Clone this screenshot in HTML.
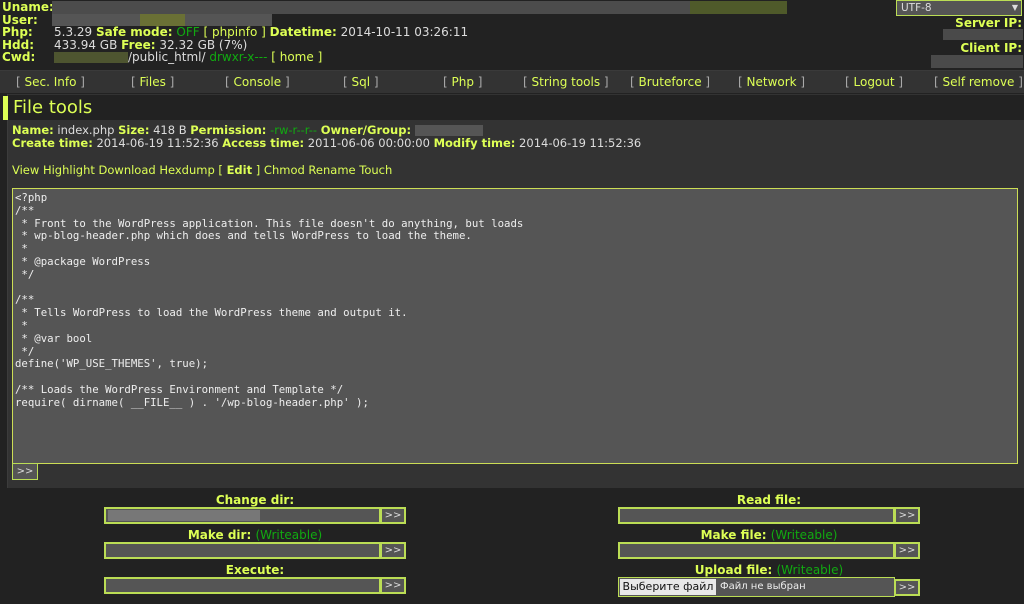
<!DOCTYPE html>
<html><head><meta charset="utf-8"><style>
*{margin:0;padding:0;box-sizing:border-box}
body{width:1024px;height:604px;background:#222;font-family:"DejaVu Sans","Liberation Sans",sans-serif;font-size:11.5px;color:#ddd;position:relative;overflow:hidden}
.a{position:absolute;white-space:nowrap}
b,.y{color:#df5;font-weight:bold}
.g{color:#1a1}
.n{color:#df5}
.blk{position:absolute;background:#4a4a4a}
.nav{position:absolute;left:0;top:70px;width:1024px;height:23px;background:#333;border-top:1px solid #3a3a3a}
.nav span{position:absolute;top:4px;color:#df5;font-size:12px}
.nav span i{font-style:normal;color:#aaa}
.inp{position:absolute;height:17px;background:#555;border:2px solid #bd5}
.btn{position:absolute;height:17px;width:26px;background:#555;border:2px solid #bd5;color:#ddd;font-size:10px;text-align:center;line-height:13px}
.lbl{position:absolute;text-align:center;color:#df5;font-weight:bold;font-size:12px}
.lbl span{color:#1a1;font-weight:normal}
pre{font-family:"DejaVu Sans Mono","Liberation Mono",monospace;font-size:10.7px;line-height:12.8px;color:#eee}
</style></head><body>
<div class="a" style="left:2px;top:1px;line-height:12.6px;font-size:12px">
<b>Uname:</b><br><b>User:</b><br><b>Php:</b><br><b>Hdd:</b><br><b>Cwd:</b></div>
<div class="blk" style="left:52px;top:1px;width:735px;height:13px;background:#4c4c4c"></div>
<div class="blk" style="left:52px;top:14px;width:220px;height:12px;background:#555"></div>
<div class="blk" style="left:140px;top:14px;width:45px;height:12px;background:#6a7035"></div>
<div class="blk" style="left:690px;top:1px;width:97px;height:13px;background:#4f5a2a"></div>
<div class="a" style="left:54px;top:26px;line-height:12.6px;font-size:12px">5.3.29 <b>Safe mode:</b> <span class="g">OFF</span> <span class="n">[ phpinfo ]</span> <b>Datetime:</b> 2014-10-11 03:26:11<br>433.94 GB <b>Free:</b> 32.32 GB (7%)<br><span style="display:inline-block;width:74px;height:11px;background:#4e5530;vertical-align:middle"></span>/public_html/ <span class="g">drwxr-x---</span> <span class="n">[ home ]</span></div>
<div class="a" style="left:896px;top:0;width:126px;height:16px;background:#555;border:1px solid #bd5;font-size:10.5px;padding-left:4px;line-height:14px">UTF-8<span style="position:absolute;right:3px;font-size:8px">▼</span></div>
<div class="a" style="right:2px;top:16px;font-size:12px"><b>Server IP:</b></div>
<div class="blk" style="left:943px;top:29px;width:80px;height:11px"></div>
<div class="a" style="right:2px;top:41px;font-size:12px"><b>Client IP:</b></div>
<div class="blk" style="left:931px;top:55px;width:92px;height:13px"></div>
<div class="nav">
<span style="left:16px"><i>[</i> Sec. Info <i>]</i></span>
<span style="left:131px"><i>[</i> Files <i>]</i></span>
<span style="left:225px"><i>[</i> Console <i>]</i></span>
<span style="left:343px"><i>[</i> Sql <i>]</i></span>
<span style="left:443px"><i>[</i> Php <i>]</i></span>
<span style="left:523px"><i>[</i> String tools <i>]</i></span>
<span style="left:630px"><i>[</i> Bruteforce <i>]</i></span>
<span style="left:738px"><i>[</i> Network <i>]</i></span>
<span style="left:845px"><i>[</i> Logout <i>]</i></span>
<span style="left:934px"><i>[</i> Self remove <i>]</i></span>
</div>
<div class="a" style="left:7px;top:94px;width:1017px;height:394px;background:#333;border-left:1px solid #3c3c3c"></div>
<div class="a" style="left:8px;top:95px;width:1016px;height:25px;background:#222"></div>
<div class="a" style="left:3px;top:96px;width:5px;height:24px;background:#df5"></div>
<div class="a" style="left:13px;top:97px;font-size:18px;color:#df5;line-height:22px">File tools</div>
<div class="a" style="left:12px;top:124px;line-height:13px;font-size:11.5px"><b>Name:</b> index.php <b>Size:</b> 418 B <b>Permission:</b> <span class="g">-rw-r--r--</span> <b>Owner/Group:</b> <span style="display:inline-block;width:68px;height:11px;background:#555;vertical-align:middle"></span><br><b>Create time:</b> 2014-06-19 11:52:36 <b>Access time:</b> 2011-06-06 00:00:00 <b>Modify time:</b> 2014-06-19 11:52:36</div>
<div class="a" style="left:12px;top:163px;color:#df5;font-size:11.5px">View Highlight Download Hexdump <span style="color:#df5">[ <b>Edit</b> ]</span> Chmod Rename Touch</div>
<div class="a" style="left:12px;top:188px;width:1006px;height:276px;background:#555;border:1px solid #cd5;padding:3px 2px">
<pre>&lt;?php
/**
 * Front to the WordPress application. This file doesn't do anything, but loads
 * wp-blog-header.php which does and tells WordPress to load the theme.
 *
 * @package WordPress
 */

/**
 * Tells WordPress to load the WordPress theme and output it.
 *
 * @var bool
 */
define('WP_USE_THEMES', true);

/** Loads the WordPress Environment and Template */
require( dirname( __FILE__ ) . '/wp-blog-header.php' );
</pre></div>
<div class="btn" style="left:12px;top:463px;width:26px;height:17px;border-width:1px;line-height:15px">&gt;&gt;</div>

<div class="lbl" style="left:104px;top:493px;width:302px">Change dir:</div>
<div class="inp" style="left:104px;top:507px;width:277px"><div style="position:absolute;left:2px;top:1px;width:152px;height:11px;background:#777"></div></div>
<div class="btn" style="left:380px;top:507px">&gt;&gt;</div>
<div class="lbl" style="left:104px;top:528px;width:302px">Make dir: <span>(Writeable)</span></div>
<div class="inp" style="left:104px;top:542px;width:277px"></div>
<div class="btn" style="left:380px;top:542px">&gt;&gt;</div>
<div class="lbl" style="left:104px;top:563px;width:302px">Execute:</div>
<div class="inp" style="left:104px;top:577px;width:277px"></div>
<div class="btn" style="left:380px;top:577px">&gt;&gt;</div>

<div class="lbl" style="left:618px;top:493px;width:302px">Read file:</div>
<div class="inp" style="left:618px;top:507px;width:277px"></div>
<div class="btn" style="left:894px;top:507px">&gt;&gt;</div>
<div class="lbl" style="left:618px;top:528px;width:302px">Make file: <span>(Writeable)</span></div>
<div class="inp" style="left:618px;top:542px;width:277px"></div>
<div class="btn" style="left:894px;top:542px">&gt;&gt;</div>
<div class="lbl" style="left:618px;top:563px;width:302px">Upload file: <span>(Writeable)</span></div>
<div class="inp" style="left:618px;top:577px;width:277px;height:20px;border-width:1px">
<div style="position:absolute;left:1px;top:1px;width:96px;height:16px;background:#e8e8e8;color:#111;font-size:11px;line-height:16px;text-align:center">Выберите файл</div>
<div style="position:absolute;left:101px;top:3px;color:#eee;font-size:10px">Файл не выбран</div></div>
<div class="btn" style="left:894px;top:579px">&gt;&gt;</div>
</body></html>
